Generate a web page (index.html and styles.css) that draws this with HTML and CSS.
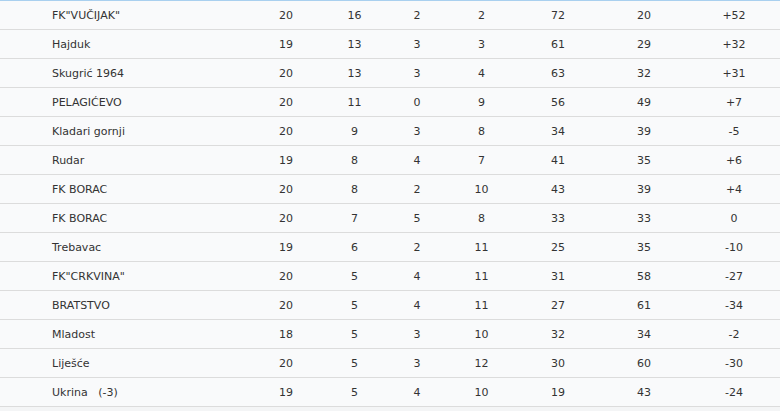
FILE: index.html
```html
<!DOCTYPE html>
<html lang="bs">
<head>
<meta charset="utf-8">
<title>Tabela</title>
<link rel="stylesheet" href="styles.css">
</head>
<body>
<table class="standings">
  <colgroup>
    <col class="c-name">
    <col class="c1"><col class="c2"><col class="c3"><col class="c4"><col class="c5"><col class="c6"><col class="c7">
  </colgroup>
  <tbody>
    <tr><td class="team">FK"VUČIJAK"</td><td>20</td><td>16</td><td>2</td><td>2</td><td>72</td><td>20</td><td>+52</td></tr>
    <tr><td class="team">Hajduk</td><td>19</td><td>13</td><td>3</td><td>3</td><td>61</td><td>29</td><td>+32</td></tr>
    <tr><td class="team">Skugrić 1964</td><td>20</td><td>13</td><td>3</td><td>4</td><td>63</td><td>32</td><td>+31</td></tr>
    <tr><td class="team">PELAGIĆEVO</td><td>20</td><td>11</td><td>0</td><td>9</td><td>56</td><td>49</td><td>+7</td></tr>
    <tr><td class="team">Kladari gornji</td><td>20</td><td>9</td><td>3</td><td>8</td><td>34</td><td>39</td><td>-5</td></tr>
    <tr><td class="team">Rudar</td><td>19</td><td>8</td><td>4</td><td>7</td><td>41</td><td>35</td><td>+6</td></tr>
    <tr><td class="team">FK BORAC</td><td>20</td><td>8</td><td>2</td><td>10</td><td>43</td><td>39</td><td>+4</td></tr>
    <tr><td class="team">FK BORAC</td><td>20</td><td>7</td><td>5</td><td>8</td><td>33</td><td>33</td><td>0</td></tr>
    <tr><td class="team">Trebavac</td><td>19</td><td>6</td><td>2</td><td>11</td><td>25</td><td>35</td><td>-10</td></tr>
    <tr><td class="team">FK"CRKVINA"</td><td>20</td><td>5</td><td>4</td><td>11</td><td>31</td><td>58</td><td>-27</td></tr>
    <tr><td class="team">BRATSTVO</td><td>20</td><td>5</td><td>4</td><td>11</td><td>27</td><td>61</td><td>-34</td></tr>
    <tr><td class="team">Mladost</td><td>18</td><td>5</td><td>3</td><td>10</td><td>32</td><td>34</td><td>-2</td></tr>
    <tr><td class="team">Liješće</td><td>20</td><td>5</td><td>3</td><td>12</td><td>30</td><td>60</td><td>-30</td></tr>
    <tr><td class="team">Ukrina &nbsp; (-3)</td><td>19</td><td>5</td><td>4</td><td>10</td><td>19</td><td>43</td><td>-24</td></tr>
  </tbody>
</table>
</body>
</html>
```
FILE: styles.css
```css
html, body {
  margin: 0;
  padding: 0;
  background: #f4f5f6;
}
.standings {
  width: 780px;
  border-collapse: collapse;
  table-layout: fixed;
  border-top: 1px solid #a9d0ef;
  font-family: "DejaVu Sans", Verdana, sans-serif;
  font-size: 11px;
  color: #333;
  background: #f9fafb;
}
.c-name { width: 250px; }
.c1 { width: 72px; }
.c2 { width: 65px; }
.c3 { width: 60px; }
.c4 { width: 69px; }
.c5 { width: 84px; }
.c6 { width: 88px; }
.c7 { width: 92px; }
.standings td {
  height: 28px;
  padding: 0;
  text-align: center;
  vertical-align: middle;
  border-bottom: 1px solid #dcdcdc;
  white-space: pre;
}
.standings td.team {
  text-align: left;
  padding-left: 52px;
}
```
